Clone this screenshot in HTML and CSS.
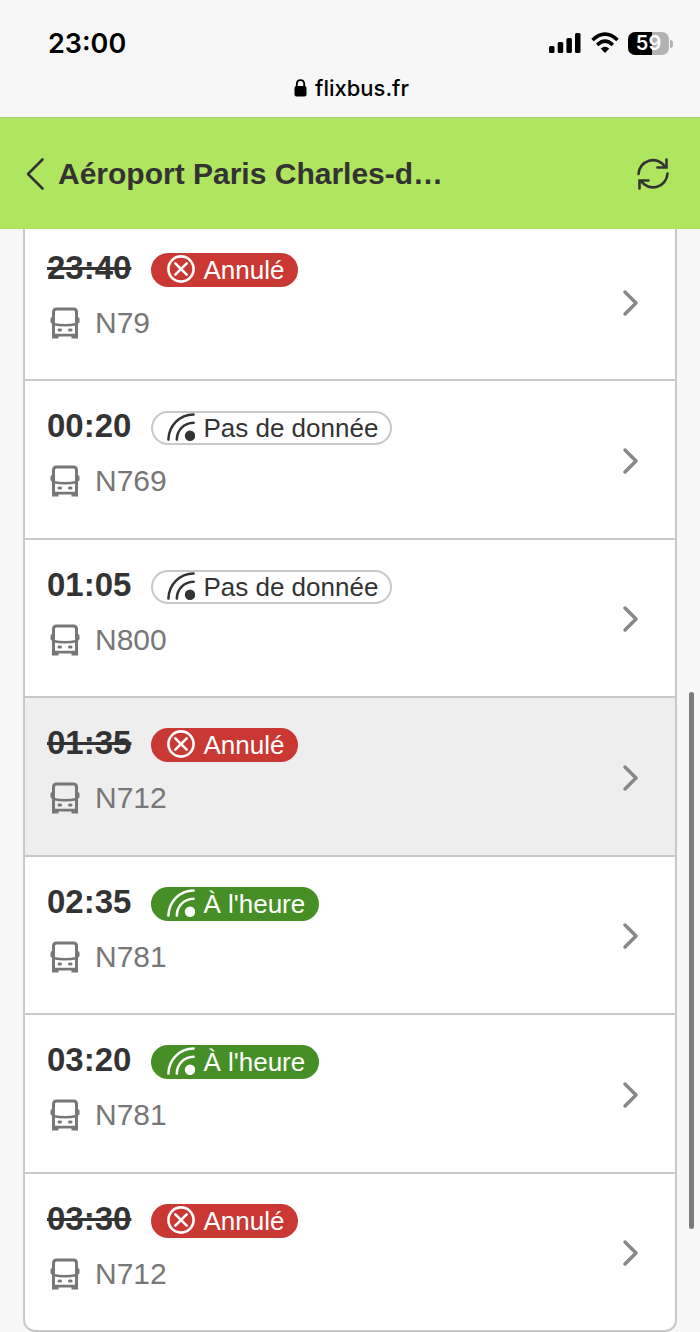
FILE: index.html
```html
<!DOCTYPE html>
<html lang="fr">
  <head>
    <meta charset="UTF-8" />
    <meta name="viewport" content="width=device-width, initial-scale=1.0" />
    <title>Aéroport Paris Charles-de-Gaulle</title>
    <link rel="stylesheet" href="styles.css">
  </head>

  <body>
    <!-- Shared icons -->
    <svg class="sprite" aria-hidden="true">
      <symbol id="icon-bus" viewBox="0 0 30 32">
        <path d="M3.500 30V5Q3.500 2 6.500 2H23.500Q26.500 2 26.500 5V30" fill="none" stroke="currentColor" stroke-width="3" />
        <path d="M3 17Q15 19.500 27 17" fill="none" stroke="currentColor" stroke-width="2.400" />
        <path d="M2 26.800H28V31.500H21.500V29.500H8.500V31.500H2Z" fill="currentColor" />
        <path d="M3 10H2.500Q0.500 10 0.500 12V15Q0.500 16.500 3 16.500ZM27 10H27.500Q29.500 10 29.500 12V15Q29.500 16.500 27 16.500Z" fill="currentColor" />
        <rect x="7.500" y="21.500" width="4.500" height="3" rx="1.500" fill="currentColor" />
        <rect x="18" y="21.500" width="4.500" height="3" rx="1.500" fill="currentColor" />
      </symbol>
      <symbol id="icon-cancel" viewBox="0 0 28 28">
        <g fill="none" stroke="currentColor" stroke-width="2.600" stroke-linecap="round">
          <circle cx="14" cy="14" r="12.600" />
          <path d="M8.300 8.300L19.700 19.700M19.700 8.300L8.300 19.700" />
        </g>
      </symbol>
      <symbol id="icon-live" viewBox="0 0 28 28">
        <g fill="none" stroke="currentColor" stroke-width="2.500" stroke-linecap="round">
          <path d="M1.400 26.600C1.700 12.500 12.500 1.600 26.600 1.400" />
          <path d="M9.800 26.600C10 17 17 9.900 26.600 9.700" />
        </g>
        <circle cx="23" cy="22.800" r="5.200" fill="currentColor" />
      </symbol>
      <symbol id="icon-next" viewBox="0 0 18 28">
        <path d="M3 3L14 14L3 25" fill="none" stroke="currentColor" stroke-width="3.500" stroke-linecap="round" stroke-linejoin="round" />
      </symbol>
    </svg>

    <div class="browser-bar">
      <div class="status">
        <span class="clock">23:00</span>
        <div class="status-icons">
          <svg width="33" height="22" viewBox="0 0 33 22" aria-hidden="true">
            <rect x="0" y="14" width="5.500" height="7" rx="1.500" />
            <rect x="8.700" y="10" width="5.500" height="11" rx="1.500" />
            <rect x="17.400" y="6" width="5.500" height="15" rx="1.500" />
            <rect x="26" y="1" width="5.500" height="20" rx="1.500" />
          </svg>
          <svg width="28" height="22" viewBox="0 0 28 22" aria-hidden="true">
            <g fill="none" stroke="#000" stroke-width="3.600">
              <path d="M1.500 8Q14 -3.800 26.500 8" />
              <path d="M6.200 13Q14 5.400 21.800 13" />
            </g>
            <path d="M9.700 16.600Q14 12.900 18.300 16.600L14 21Z" />
          </svg>
          <span class="battery">59</span>
        </div>
      </div>
      <div class="address">
        <svg width="13" height="18" viewBox="0 0 13 18" aria-hidden="true">
          <path d="M2.800 8V5Q2.800 1.200 6.500 1.200T10.200 5V8" fill="none" stroke="#000" stroke-width="1.800" />
          <rect x="0.500" y="7" width="12" height="10.500" rx="2" />
        </svg>
        <span>flixbus.fr</span>
      </div>
    </div>

    <header class="header">
      <button class="icon-button" type="button" aria-label="Retour">
        <svg width="20" height="34" viewBox="0 0 20 34">
          <path d="M16.500 2.500L2 17L16.500 31.500" fill="none" stroke="currentColor" stroke-width="2.600" stroke-linecap="round" stroke-linejoin="round" />
        </svg>
      </button>
      <h1 class="title">Aéroport Paris Charles-d…</h1>
      <button class="icon-button" type="button" aria-label="Actualiser">
        <svg width="32" height="32" viewBox="0 0 32 32">
          <g fill="none" stroke="currentColor" stroke-width="2.600" stroke-linecap="round">
            <path d="M1.500 16A14.500 14.500 0 0 1 28 8.500" />
            <path d="M29.500 1.500V9.500H20.500" />
            <path d="M30.500 15.500A14.500 14.500 0 0 1 4 23" />
            <path d="M2.500 30.500V22.500H11.500" />
          </g>
        </svg>
      </button>
    </header>

    <ul class="departures">
      <li class="departure">
        <a href="#">
          <div class="info">
            <div class="schedule">
              <time class="time cancelled">23:40</time>
              <span class="badge badge-cancelled"><svg class="badge-icon"><use href="#icon-cancel" /></svg>Annulé</span>
            </div>
            <div class="line"><svg class="bus"><use href="#icon-bus" /></svg>N79</div>
          </div>
          <svg class="next"><use href="#icon-next" /></svg>
        </a>
      </li>
      <li class="departure">
        <a href="#">
          <div class="info">
            <div class="schedule">
              <time class="time">00:20</time>
              <span class="badge"><svg class="badge-icon"><use href="#icon-live" /></svg>Pas de donnée</span>
            </div>
            <div class="line"><svg class="bus"><use href="#icon-bus" /></svg>N769</div>
          </div>
          <svg class="next"><use href="#icon-next" /></svg>
        </a>
      </li>
      <li class="departure">
        <a href="#">
          <div class="info">
            <div class="schedule">
              <time class="time">01:05</time>
              <span class="badge"><svg class="badge-icon"><use href="#icon-live" /></svg>Pas de donnée</span>
            </div>
            <div class="line"><svg class="bus"><use href="#icon-bus" /></svg>N800</div>
          </div>
          <svg class="next"><use href="#icon-next" /></svg>
        </a>
      </li>
      <li class="departure active">
        <a href="#">
          <div class="info">
            <div class="schedule">
              <time class="time cancelled">01:35</time>
              <span class="badge badge-cancelled"><svg class="badge-icon"><use href="#icon-cancel" /></svg>Annulé</span>
            </div>
            <div class="line"><svg class="bus"><use href="#icon-bus" /></svg>N712</div>
          </div>
          <svg class="next"><use href="#icon-next" /></svg>
        </a>
      </li>
      <li class="departure">
        <a href="#">
          <div class="info">
            <div class="schedule">
              <time class="time">02:35</time>
              <span class="badge badge-ontime"><svg class="badge-icon"><use href="#icon-live" /></svg>À l'heure</span>
            </div>
            <div class="line"><svg class="bus"><use href="#icon-bus" /></svg>N781</div>
          </div>
          <svg class="next"><use href="#icon-next" /></svg>
        </a>
      </li>
      <li class="departure">
        <a href="#">
          <div class="info">
            <div class="schedule">
              <time class="time">03:20</time>
              <span class="badge badge-ontime"><svg class="badge-icon"><use href="#icon-live" /></svg>À l'heure</span>
            </div>
            <div class="line"><svg class="bus"><use href="#icon-bus" /></svg>N781</div>
          </div>
          <svg class="next"><use href="#icon-next" /></svg>
        </a>
      </li>
      <li class="departure">
        <a href="#">
          <div class="info">
            <div class="schedule">
              <time class="time cancelled">03:30</time>
              <span class="badge badge-cancelled"><svg class="badge-icon"><use href="#icon-cancel" /></svg>Annulé</span>
            </div>
            <div class="line"><svg class="bus"><use href="#icon-bus" /></svg>N712</div>
          </div>
          <svg class="next"><use href="#icon-next" /></svg>
        </a>
      </li>
    </ul>

    <div class="scroll-thumb"></div>
  </body>
</html>
```
FILE: styles.css
```css
* {
  margin: 0;
  padding: 0;
  box-sizing: border-box;
}

body {
  min-height: 100vh;
  display: flex;
  flex-direction: column;
  font-family: "Liberation Sans", Arial, sans-serif;
  background-color: #f7f7f7;
  color: #333;
}

.sprite {
  display: none;
}

/* Browser bar */
.browser-bar {
  padding: 24px 27px 15px 48px;
  font-family: Inter, sans-serif;
  color: #000;
}

.status {
  display: flex;
  justify-content: space-between;
  align-items: center;
  height: 38px;
}

.clock {
  font-size: 27px;
  font-weight: 600;
}

.status-icons {
  display: flex;
  align-items: center;
  gap: 9px;
}

.battery {
  position: relative;
  width: 41px;
  margin-right: 4px;
  border-radius: 7px;
  background: linear-gradient(to right, #000 59%, #b2b2b2 59%);
  color: #fff;
  font-size: 20px;
  font-weight: 600;
  line-height: 23px;
  text-align: center;
}

.battery::after {
  content: "";
  position: absolute;
  top: 8px;
  right: -4px;
  width: 3px;
  height: 8px;
  border-radius: 0 4px 4px 0;
  background-color: #b2b2b2;
}

.address {
  display: flex;
  justify-content: center;
  align-items: center;
  gap: 8px;
  margin-top: 12px;
  padding-right: 18px;
  font-size: 22px;
  font-weight: 500;
  line-height: 28px;
}

/* Station header */
.header {
  position: relative;
  z-index: 1;
  display: flex;
  align-items: center;
  height: 112px;
  padding: 0 31px 0 26px;
  border-top: 1px solid #a9cf70;
  background-color: #b0e55f;
}

.icon-button {
  display: flex;
  border: 0;
  background: none;
  color: #333;
  cursor: pointer;
}

.title {
  flex: 1;
  margin-left: 12px;
  font-size: 30px;
  line-height: 36px;
}

/* Departures, scrolled slightly under the header */
.departures {
  flex: 1;
  display: flex;
  flex-direction: column;
  margin: -8px 23px 0;
  border: 2px solid #c8c8c8;
  border-radius: 0 0 12px 12px;
  background-color: #fff;
  list-style: none;
  overflow: hidden;
}

.departure {
  flex: 1;
}

.departure + .departure {
  border-top: 2px solid #c8c8c8;
}

.departure.active {
  background-color: #eee;
}

.departure a {
  display: flex;
  justify-content: space-between;
  align-items: center;
  padding: 23px 35px 20px 22px;
  color: inherit;
  text-decoration: none;
}

.schedule {
  display: flex;
  align-items: baseline;
  gap: 20px;
}

.time {
  font-size: 33px;
  font-weight: bold;
  line-height: 44px;
}

.cancelled {
  text-decoration: line-through;
}

.badge {
  padding: 0 12px 0 14px;
  border: 2px solid #c8c8c8;
  border-radius: 17px;
  font-size: 26px;
  line-height: 30px;
  white-space: nowrap;
}

.badge-cancelled {
  border-color: #c93833;
  background-color: #c93833;
  color: #fff;
}

.badge-ontime {
  border-color: #468f26;
  background-color: #468f26;
  color: #fff;
}

.badge-icon {
  width: 28px;
  height: 28px;
  margin-right: 8px;
  vertical-align: -4px;
}

.line {
  display: flex;
  align-items: center;
  gap: 15px;
  margin-top: 13px;
  padding-left: 3px;
  color: #777;
  font-size: 30px;
  line-height: 40px;
}

.bus {
  width: 30px;
  height: 32px;
}

.next {
  width: 18px;
  height: 28px;
  margin-top: 16px;
  color: #888;
}

.scroll-thumb {
  position: fixed;
  top: 692px;
  right: 6px;
  bottom: 103px;
  width: 5px;
  border-radius: 3px;
  background-color: #7b7b7b;
}
```
